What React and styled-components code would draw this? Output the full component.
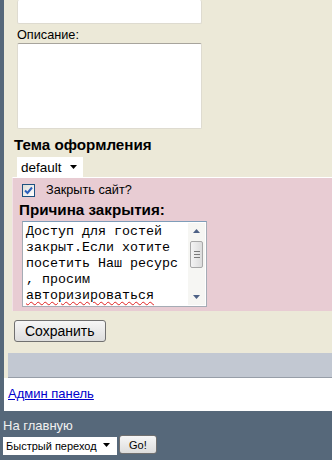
import styled, { createGlobalStyle } from "styled-components";

const GlobalStyle = createGlobalStyle`
  body {
    margin: 0;
    background: #56687a;
    font-family: "Liberation Sans", Arial, sans-serif;
  }
`;

const Page = styled.div`
  width: 332px;
  height: 460px;
  overflow: hidden;
  background: #56687a;
`;

const Content = styled.div`
  margin-left: 4px;
  background: #fff;
`;

const Panel = styled.div`
  background: #ece9d8;
  padding-left: 4px;
  display: flex;
  flex-direction: column;
  align-items: flex-start;
`;

const Area = styled.div`
  width: 185px;
  height: ${(p) => p.$h}px;
  margin-left: ${(p) => p.$ml || 9}px;
  margin-top: ${(p) => p.$mt || 0}px;
  box-sizing: border-box;
  background: #fff;
  border: 1px solid #dedbd0;
  border-top: ${(p) => (p.$cut ? "none" : "1px solid #a7a49c")};
  border-radius: 2px;
`;

const Label = styled.div`
  margin: 4px 0 0 9px;
  font-size: 12.7px;
  line-height: 14px;
  color: #000;
`;

const Heading = styled.div`
  margin: ${(p) => p.$m};
  font-size: 15.2px;
  line-height: 17px;
  font-weight: bold;
  color: #000;
`;

const SelectWrap = styled.div`
  position: relative;
  margin: ${(p) => p.$m};
  width: ${(p) => p.$w}px;
  height: ${(p) => p.$h}px;
`;

const Select = styled.select`
  appearance: none;
  width: 100%;
  height: 100%;
  border: none;
  border-radius: 0;
  background: #fff;
  padding: 0 0 0 ${(p) => p.$pl}px;
  font-family: "Liberation Sans", Arial, sans-serif;
  font-size: ${(p) => p.$fs}px;
  color: #000;
  outline: none;
`;

const Arrow = styled.svg`
  position: absolute;
  right: ${(p) => p.$r}px;
  top: 50%;
  margin-top: -2px;
  pointer-events: none;
`;

const Closing = styled.div`
  align-self: stretch;
  margin-left: 4px;
  border-top: 1px solid #fff;
  border-left: 1px solid #f2e2e6;
  background: #e8ccd3;
  padding: 5px 0 4px 0;
`;

const CheckRow = styled.label`
  display: flex;
  align-items: center;
  padding-left: 9px;
  font-size: 12.7px;
  line-height: 14px;
  color: #000;
`;

const Box = styled.span`
  width: 13px;
  height: 13px;
  box-sizing: border-box;
  border: 1px solid #1c5180;
  background: linear-gradient(135deg, #dcdcd7, #fff);
  display: flex;
  align-items: center;
  justify-content: center;
  margin-right: 11px;
`;

const Reason = styled.div`
  margin-left: 9px;
  margin-top: 3px;
  width: 185px;
  height: 86px;
  box-sizing: border-box;
  border: 1px solid #a5acb5;
  border-top-color: #7f9db9;
  background: #fff;
  display: flex;
`;

const ReasonText = styled.div`
  flex: 1;
  padding: 2px 0 0 3px;
  font-family: "Liberation Mono", "Courier New", monospace;
  font-size: 13.33px;
  line-height: 16px;
  color: #000;
  overflow: hidden;
  word-wrap: break-word;
`;

const Typo = styled.span`
  text-decoration: underline wavy #e02020;
  text-decoration-thickness: 1px;
  text-underline-offset: 2px;
`;

const ScrollBar = styled.div`
  width: 17px;
  margin: 1px 1px 1px 0;
  background: #f6f6f3;
  display: flex;
  flex-direction: column;
  align-items: center;
`;

const ScrollBtn = styled.div`
  height: 16px;
  width: 100%;
  display: flex;
  align-items: center;
  justify-content: center;
`;

const Thumb = styled.div`
  width: 13px;
  height: 27px;
  margin-top: 2px;
  box-sizing: border-box;
  border: 1px solid #a8a8a8;
  border-radius: 2px;
  background: linear-gradient(90deg, #f4f4f4, #dcdcdc);
  display: flex;
  flex-direction: column;
  align-items: center;
  justify-content: center;
  gap: 2px;
`;

const Grip = styled.span`
  width: 6px;
  height: 1px;
  background: #7a7a7a;
`;

const Track = styled.div`
  flex: 1;
`;

const Button = styled.button`
  margin: ${(p) => p.$m};
  height: ${(p) => p.$h}px;
  padding: 0 ${(p) => p.$px}px;
  box-sizing: border-box;
  border: 1px solid #707070;
  border-radius: 3px;
  background: linear-gradient(#f6f6f6, #dddddd);
  font-family: "Liberation Sans", Arial, sans-serif;
  font-size: ${(p) => p.$fs}px;
  color: #000;
`;

const Bar = styled.div`
  align-self: stretch;
  margin-top: 11px;
  height: 25px;
  box-sizing: border-box;
  background: #c2c8d2;
  border-bottom: 1px solid #979ea8;
`;

const Links = styled.div`
  height: 33px;
  padding: 6px 0 0 4px;
  box-sizing: border-box;
`;

const AdminLink = styled.a`
  font-size: 13px;
  line-height: 15px;
  color: #0000cc;
  text-decoration: underline;
`;

const Footer = styled.div`
  height: 50px;
  padding: 7px 0 0 3px;
  box-sizing: border-box;
`;

const HomeLink = styled.div`
  font-size: 13px;
  line-height: 15px;
  color: #f0f0f0;
`;

const Jump = styled.form`
  display: flex;
  align-items: center;
  gap: 2px;
  margin-top: 2px;
`;

function DownArrow({ r, size = 7 }) {
  return (
    <Arrow $r={r} width={size} height="4" viewBox="0 0 7 4">
      <path d="M0 0h7L3.5 4z" fill="#000" />
    </Arrow>
  );
}

function App() {
  return (
    <Page>
      <GlobalStyle />
      <Content>
        <Panel>
          <Area $h={24} $cut />
          <Label>Описание:</Label>
          <Area $h={86} $mt={1} />
          <Heading $m="7px 0 0 6px">Тема оформления</Heading>
          <SelectWrap $m="4px 0 0 9px" $w={66} $h={20}>
            <Select $pl={4} $fs={13.5} defaultValue="default">
              <option value="default">default</option>
            </Select>
            <DownArrow r={6} />
          </SelectWrap>
          <Closing>
            <CheckRow>
              <Box>
                <svg width="9" height="9" viewBox="0 0 9 9">
                  <path d="M1 4.5l2.5 2.5L8 1.5" stroke="#2c5fbb" strokeWidth="2" fill="none" />
                </svg>
              </Box>
              Закрыть сайт?
            </CheckRow>
            <Heading $m="4px 0 0 6px">Причина закрытия:</Heading>
            <Reason>
              <ReasonText>
                Доступ для гостей закрыт.Если хотите посетить Наш ресурс , просим{" "}
                <Typo>авторизироваться</Typo>
              </ReasonText>
              <ScrollBar>
                <ScrollBtn>
                  <svg width="7" height="4" viewBox="0 0 7 4">
                    <path d="M0 4h7L3.5 0z" fill="#4d6185" />
                  </svg>
                </ScrollBtn>
                <Thumb>
                  <Grip />
                  <Grip />
                  <Grip />
                </Thumb>
                <Track />
                <ScrollBtn>
                  <svg width="7" height="4" viewBox="0 0 7 4">
                    <path d="M0 0h7L3.5 4z" fill="#4d6185" />
                  </svg>
                </ScrollBtn>
              </ScrollBar>
            </Reason>
          </Closing>
          <Button $m="9px 0 0 6px" $h={22} $px={10} $fs={14}>
            Сохранить
          </Button>
          <Bar />
        </Panel>
        <Links>
          <AdminLink href="#">Админ панель</AdminLink>
        </Links>
      </Content>
      <Footer>
        <HomeLink>На главную</HomeLink>
        <Jump>
          <SelectWrap $m="0" $w={114} $h={18}>
            <Select $pl={3} $fs={11}>
              <option>Быстрый переход</option>
            </Select>
            <DownArrow r={7} />
          </SelectWrap>
          <Button $m="0" $h={19} $px={9} $fs={11}>
            Go!
          </Button>
        </Jump>
      </Footer>
    </Page>
  );
}

export default App;
